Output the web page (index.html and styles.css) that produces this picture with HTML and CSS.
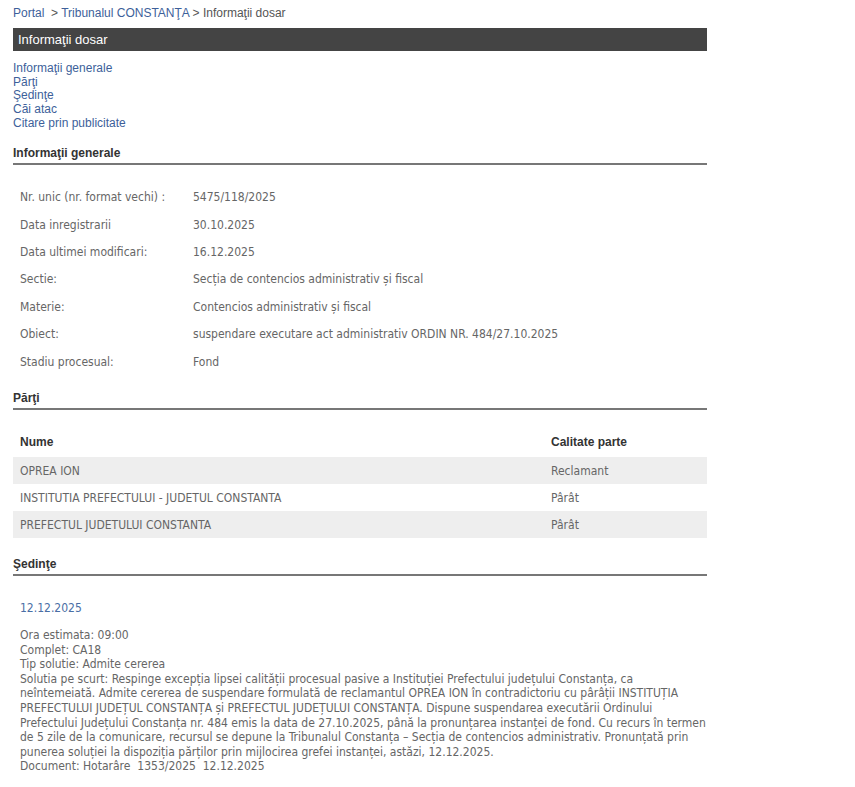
FILE: index.html
```html
<!DOCTYPE html>
<html lang="ro">
<head>
<meta charset="utf-8">
<title>Informaţii dosar</title>
<link rel="stylesheet" href="styles.css">
</head>
<body>
<div class="page">
  <div class="breadcrumb"><a href="#">Portal</a> &nbsp;&gt; <a href="#">Tribunalul CONSTANŢA</a> &gt; <span>Informaţii dosar</span></div>
  <div class="titlebar">Informaţii dosar</div>
  <ul class="toc">
    <li><a href="#">Informaţii generale</a></li>
    <li><a href="#">Părţi</a></li>
    <li><a href="#">Şedinţe</a></li>
    <li><a href="#">Căi atac</a></li>
    <li><a href="#">Citare prin publicitate</a></li>
  </ul>

  <h2 class="section">Informaţii generale</h2>
  <table class="info">
    <tr><td class="lbl">Nr. unic (nr. format vechi) :</td><td>5475/118/2025</td></tr>
    <tr><td class="lbl">Data inregistrarii</td><td>30.10.2025</td></tr>
    <tr><td class="lbl">Data ultimei modificari:</td><td>16.12.2025</td></tr>
    <tr><td class="lbl">Sectie:</td><td>Secția de contencios administrativ și fiscal</td></tr>
    <tr><td class="lbl">Materie:</td><td>Contencios administrativ și fiscal</td></tr>
    <tr><td class="lbl">Obiect:</td><td>suspendare executare act administrativ ORDIN NR. 484/27.10.2025</td></tr>
    <tr><td class="lbl">Stadiu procesual:</td><td>Fond</td></tr>
  </table>

  <h2 class="section">Părţi</h2>
  <table class="parti">
    <thead><tr><th class="c1">Nume</th><th>Calitate parte</th></tr></thead>
    <tbody>
      <tr class="alt"><td>OPREA ION</td><td>Reclamant</td></tr>
      <tr><td>INSTITUTIA PREFECTULUI - JUDETUL CONSTANTA</td><td>Pârât</td></tr>
      <tr class="alt"><td>PREFECTUL JUDETULUI CONSTANTA</td><td>Pârât</td></tr>
    </tbody>
  </table>

  <h2 class="section">Şedinţe</h2>
  <div class="sedinta">
    <div class="date">12.12.2025</div>
    <div class="details">
      Ora estimata: 09:00<br>
      Complet: CA18<br>
      Tip solutie: Admite cererea<br>
      Solutia pe scurt: Respinge excepția lipsei calității procesual pasive a Instituției Prefectului județului Constanța, ca neîntemeiată. Admite cererea de suspendare formulată de reclamantul OPREA ION în contradictoriu cu pârâții INSTITUȚIA PREFECTULUI JUDEȚUL CONSTANȚA și PREFECTUL JUDEȚULUI CONSTANȚA. Dispune suspendarea executării Ordinului Prefectului Județului Constanța nr. 484 emis la data de 27.10.2025, până la pronunțarea instanței de fond. Cu recurs în termen de 5 zile de la comunicare, recursul se depune la Tribunalul Constanța – Secția de contencios administrativ. Pronunțată prin punerea soluției la dispoziția părților prin mijlocirea grefei instanței, astăzi, 12.12.2025.<br>
      Document: Hotarâre &nbsp;1353/2025 &nbsp;12.12.2025
    </div>
  </div>
</div>
</body>
</html>
```

FILE: styles.css
```css
html, body { margin: 0; padding: 0; background: #fff; }
body { font-family: "Liberation Sans", Arial, sans-serif; font-size: 12px; color: #555; }
.page { width: 694px; margin-left: 13px; padding-top: 5px; }
a { color: #3d5f9a; text-decoration: none; }
.breadcrumb { height: 16px; line-height: 16px; color: #555; }
.titlebar { margin-top: 7px; background: #444; color: #fff; font-size: 13px; height: 23px; line-height: 23px; padding-left: 5px; }
.toc { list-style: none; margin: 11px 0 0; padding: 0; line-height: 13.7px; }
.section { font-size: 12px; font-weight: bold; color: #333; margin: 0; padding-bottom: 3px; border-bottom: 2px solid #777; }
.toc + .section { margin-top: 15px; }
table { border-collapse: collapse; width: 100%; }
.info { margin-top: 19px; margin-bottom: 16px; font-family: "DejaVu Sans Condensed", sans-serif; font-size: 12px; color: #666; }
.info td { height: 27.4px; padding: 0 0 0 7px; vertical-align: middle; }
.info td.lbl { width: 166px; }
.parti { margin-top: 17px; margin-bottom: 19px; font-family: "DejaVu Sans Condensed", sans-serif; font-size: 12px; color: #666; }
.parti th { font-family: "Liberation Sans", Arial, sans-serif; font-size: 12px; color: #333; text-align: left; height: 30px; padding: 0 0 0 7px; vertical-align: middle; }
.parti th.c1 { width: 524px; }
.parti td { height: 27px; padding: 0 0 0 7px; }
.parti tr.alt td { background: #eee; }
.sedinta { padding: 25px 0 0 7px; font-family: "DejaVu Sans Condensed", sans-serif; font-size: 12px; color: #666; }
.sedinta .date { color: #4a6ea5; font-size: 12px; margin-bottom: 13px; }
.details { line-height: 14.55px; }
```
